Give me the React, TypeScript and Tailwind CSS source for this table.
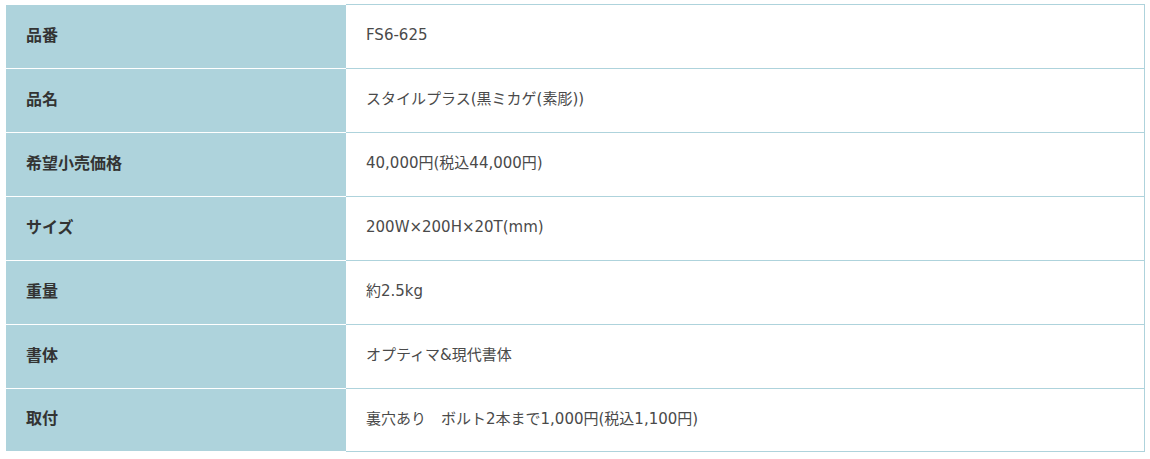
import React from "react";

const rows: [string, string][] = [
  ["品番", "FS6-625"],
  ["品名", "スタイルプラス(黒ミカゲ(素彫))"],
  ["希望小売価格", "40,000円(税込44,000円)"],
  ["サイズ", "200W×200H×20T(mm)"],
  ["重量", "約2.5kg"],
  ["書体", "オプティマ&現代書体"],
  ["取付", "裏穴あり　ボルト2本まで1,000円(税込1,100円)"],
];

export default function App() {
  return (
    <div className="w-[1150px] h-[459px] bg-white pt-[4px] pl-[5px]">
      <div className="w-[1140px] flex flex-col">
        {rows.map(([k, v], i) => {
          const last = i === rows.length - 1;
          return (
            <div key={k} className="flex">
              <div
                className={`w-[341px] h-[64px] ${last ? "border-b" : ""} border-t border-l border-white bg-[#aed3dc] flex items-center pl-[20px] pb-[6px] text-[16px] font-bold text-[#333] font-['Noto_Sans_CJK_JP',sans-serif]`}
              >
                {k}
              </div>
              <div
                className={`flex-1 h-[64px] ${last ? "border-b" : ""} border-t border-r border-[#aed3dc] flex items-center pl-[20px] pb-[2px] text-[15px] text-[#4a4a4a] font-['DejaVu_Sans','Noto_Sans_CJK_JP',sans-serif]`}
              >
                {v}
              </div>
            </div>
          );
        })}
      </div>
    </div>
  );
}
